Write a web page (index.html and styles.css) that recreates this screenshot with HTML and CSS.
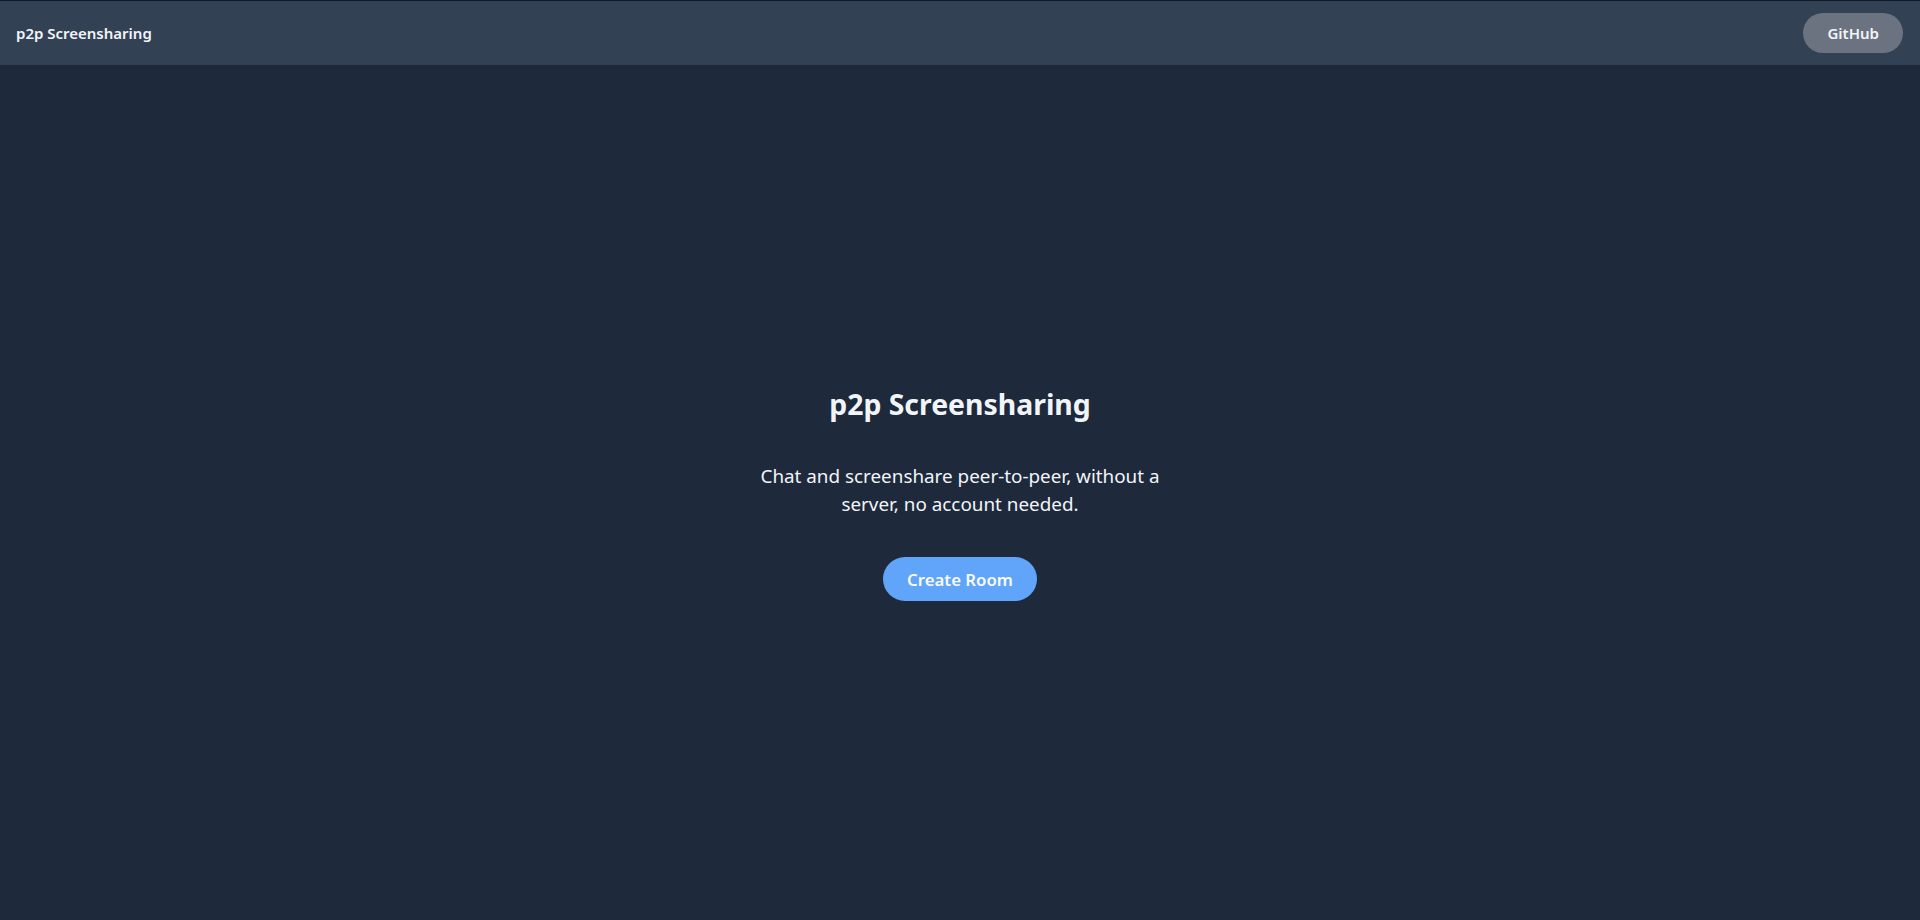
FILE: index.html
```html
<!DOCTYPE html>
<html lang="en">
<head>
<meta charset="utf-8">
<title>p2p Screensharing</title>
<link rel="stylesheet" href="styles.css">
</head>
<body>
<div class="app">
  <header class="topbar">
    <span class="brand">p2p Screensharing</span>
    <a class="github" href="#">GitHub</a>
  </header>
  <main class="hero">
    <h1 class="title">p2p Screensharing</h1>
    <p class="lead">Chat and screenshare peer-to-peer, without a server, no account needed.</p>
    <button class="create" type="button">Create Room</button>
  </main>
</div>
</body>
</html>
```
FILE: styles.css
```css
* { box-sizing: border-box; }
html, body { margin: 0; height: 100%; }
body {
  background: #1e293b;
  color: #f1f5f9;
  font-family: "Noto Sans", "Open Sans", sans-serif;
}
.app {
  min-height: 100vh;
  display: flex;
  flex-direction: column;
  border-top: 1px solid #111827;
}
.topbar {
  height: 64px;
  background: #334155;
  display: flex;
  align-items: center;
  justify-content: space-between;
  padding: 0 17px 0 16px;
}
.brand {
  font-size: 15px;
  font-weight: 600;
  color: #f1f5f9;
}
.github {
  display: inline-flex;
  align-items: center;
  justify-content: center;
  height: 40px;
  padding: 0 24px;
  border-radius: 9999px;
  background: #6b7280;
  color: #f1f5f9;
  font-size: 15px;
  font-weight: 600;
  text-decoration: none;
}
.hero {
  flex: 1;
  display: flex;
  flex-direction: column;
  align-items: center;
  justify-content: center;
  text-align: center;
  padding-top: 2px;
}
.title {
  margin: 0 0 40px;
  font-size: 28.4px;
  line-height: 36px;
  font-weight: 700;
}
.lead {
  margin: 0 0 39px;
  max-width: 448px;
  font-size: 18.85px;
  line-height: 28px;
}
.create {
  height: 44px;
  padding: 0 24px;
  border: 0;
  border-radius: 9999px;
  background: #60a5fa;
  color: #f8fafc;
  font-family: inherit;
  font-size: 16.8px;
  font-weight: 600;
  cursor: pointer;
}
```
